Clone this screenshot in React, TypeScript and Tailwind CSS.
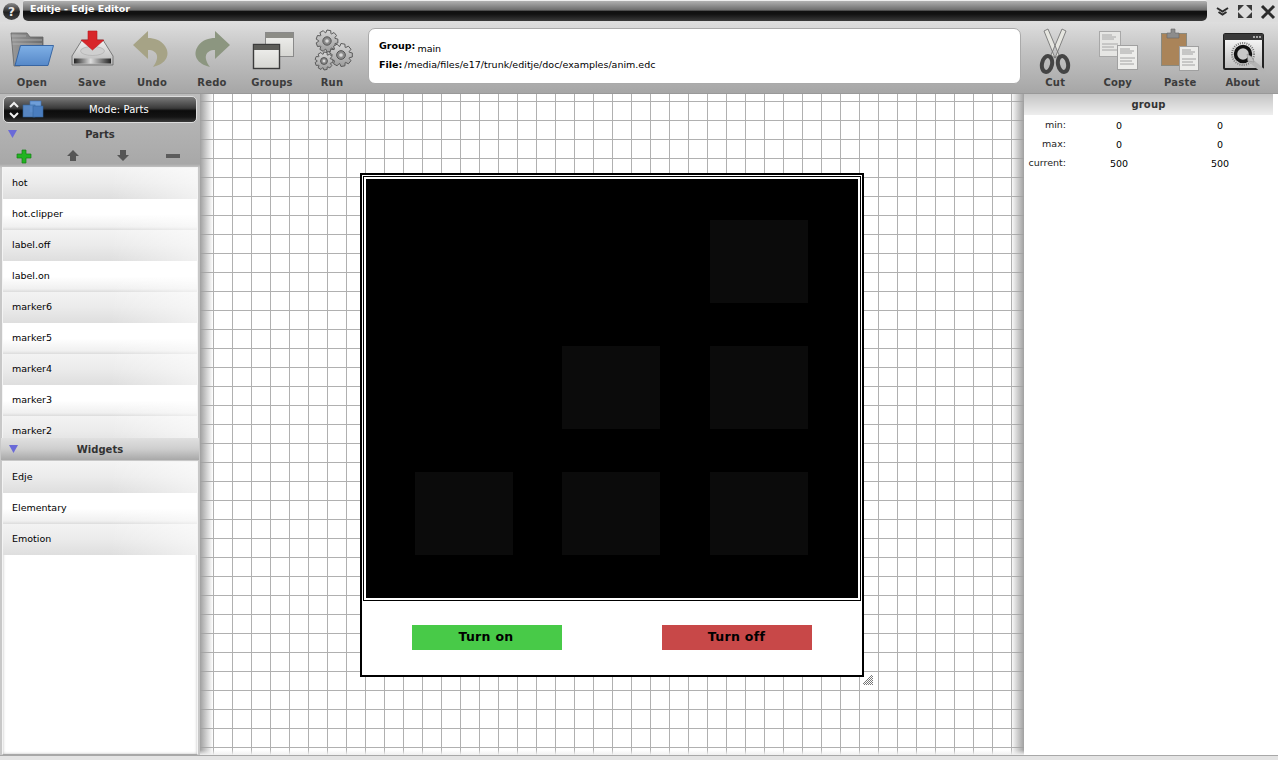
import type { ReactNode } from "react";

const parts = ["hot", "hot.clipper", "label.off", "label.on", "marker6", "marker5", "marker4", "marker3", "marker2"];
const widgets = ["Edje", "Elementary", "Emotion"];

// toothed outline for the Run icon
function gearPath(cx: number, cy: number, r: number, teeth: number) {
  const pts: string[] = [];
  const step = (Math.PI * 2) / teeth;
  for (let i = 0; i < teeth; i++) {
    const a = i * step;
    const offsets: [number, number][] = [
      [-0.32, r * 0.76],
      [-0.18, r],
      [0.18, r],
      [0.32, r * 0.76],
    ];
    for (const [o, rad] of offsets) {
      const t = a + o * step * 1.4;
      pts.push(`${(cx + Math.cos(t) * rad).toFixed(2)} ${(cy + Math.sin(t) * rad).toFixed(2)}`);
    }
  }
  return `M${pts.join("L")}Z`;
}

function Gear({ cx, cy, r }: { cx: number; cy: number; r: number }) {
  return (
    <g>
      <path d={gearPath(cx, cy, r, 9)} fill="url(#gearFill)" stroke="#5a5a5a" strokeWidth="1" />
      <circle cx={cx} cy={cy} r={r * 0.38} fill="#8a8a8a" stroke="#555" strokeWidth="1" />
      <circle cx={cx} cy={cy} r={r * 0.16} fill="#d8d8d8" />
    </g>
  );
}

function ToolButton({ label, width, children }: { label: string; width: string; children: ReactNode }) {
  return (
    <div className={`flex flex-col items-center shrink-0 ${width}`}>
      <div className="h-[48px] w-full">{children}</div>
      <span className="mt-[3px] text-[10px] leading-[12px] font-bold tracking-[0.2px] text-[#3c3c3c]">{label}</span>
    </div>
  );
}

function ListRow({ text, index }: { text: string; index: number }) {
  return (
    <div
      className={`h-[31px] shrink-0 flex items-center pl-[9px] text-[9.5px] text-black ${
        index % 2 === 0
          ? "bg-[linear-gradient(to_right,transparent_55%,rgba(255,255,255,0.55)),linear-gradient(#f3f3f3,#ececec_45%,#dedede)]"
          : "bg-[linear-gradient(to_right,transparent_55%,rgba(255,255,255,0.5)),linear-gradient(#ffffff,#ffffff_50%,#f0f0f0_90%,#dcdcdc)]"
      }`}
    >
      {text}
    </div>
  );
}

function SectionHeader({ title, className }: { title: string; className: string }) {
  return (
    <div className={`relative flex items-center justify-center shrink-0 ${className}`}>
      <svg className="absolute left-[8px] top-1/2 -translate-y-1/2" width="9" height="8" viewBox="0 0 9 8">
        <path d="M0 0H9L4.5 8Z" fill="#6a6ad8" />
      </svg>
      <span className="text-[10px] font-bold tracking-[0px] text-[#333]">{title}</span>
    </div>
  );
}

export default function App() {
  return (
    <div className="h-[760px] w-[1278px] overflow-hidden flex flex-col bg-[#d8d8d8] font-['DejaVu_Sans',sans-serif]">
      {/* title bar */}
      <div className="h-[22px] shrink-0 flex bg-[#dcdcdc]">
        <div className="w-[23px] shrink-0 flex items-center justify-center">
          <div className="w-[17px] h-[17px] mt-[1px] rounded-full bg-[linear-gradient(#8a8a8a,#222_55%,#444)] flex items-center justify-center text-[12px] leading-none font-bold text-[#e8e8e8]">
            ?
          </div>
        </div>
        <div className="w-[1184px] h-[21px] rounded-b-[5px] rounded-t-[2px] border-t border-[#eee] bg-[linear-gradient(#b0b0b0,#6e6e6e_45%,#111_52%,#111_65%,#3a3a3a)] pl-[7px] flex items-start">
          <span className="text-[9.5px] leading-[15px] font-bold text-white">Editje - Edje Editor</span>
        </div>
        <div className="flex-1">
          <svg width="71" height="22" viewBox="1207 0 71 22">
            <path d="M1217 8L1222.5 11.5L1228 8M1218.5 12L1222.5 14.5L1226.5 12" fill="none" stroke="#2c2c2c" strokeWidth="2" />
            <path d="M1238 5H1244L1238 11ZM1252 5H1246L1252 11ZM1238 18H1244L1238 12ZM1252 18H1246L1252 12Z" fill="#3a3a3a" />
            <path d="M1262 6L1274 18M1274 6L1262 18" stroke="#2c2c2c" strokeWidth="3" />
          </svg>
        </div>
      </div>

      {/* toolbar */}
      <div className="h-[72px] shrink-0 flex pl-[2px] pt-[4px] border-b border-[#999] bg-[linear-gradient(#dedede,#c4c4c4_40%,#a6a6a6)]">
        <ToolButton label="Open" width="w-[60px]">
          <svg width="60" height="48" viewBox="2 26 60 48">
            <defs>
              <linearGradient id="folderBlue" x1="0" y1="0" x2="0" y2="1">
                <stop offset="0" stopColor="#7fb0e6" />
                <stop offset="1" stopColor="#5688c8" />
              </linearGradient>
              <linearGradient id="folderBack" x1="0" y1="0" x2="1" y2="0">
                <stop offset="0" stopColor="#9a9a9a" />
                <stop offset="1" stopColor="#6c6c6c" />
              </linearGradient>
              <linearGradient id="gearFill" x1="0" y1="0" x2="0" y2="1">
                <stop offset="0" stopColor="#d6d6d6" />
                <stop offset="1" stopColor="#9c9c9c" />
              </linearGradient>
            </defs>
            <path d="M11 33H27L30 37H43V46L20 66H14Z" fill="url(#folderBack)" stroke="#666" strokeWidth="0.8" />
            <path d="M11.5 36H26M12 40H42M12.5 44H42" stroke="#b5b5b5" strokeWidth="0.8" />
            <path d="M20.5 45.5H53.5L48 65.5H15Z" fill="url(#folderBlue)" stroke="#2f5f9e" strokeWidth="0.9" />
          </svg>
        </ToolButton>
        <ToolButton label="Save" width="w-[60px]">
          <svg width="60" height="48" viewBox="62 26 60 48">
            <defs>
              <linearGradient id="diskTop" x1="0" y1="0" x2="0" y2="1">
                <stop offset="0" stopColor="#f0f0f0" />
                <stop offset="1" stopColor="#b4b4b4" />
              </linearGradient>
              <linearGradient id="diskStrip" x1="0" y1="0" x2="1" y2="0">
                <stop offset="0" stopColor="#222" />
                <stop offset="0.45" stopColor="#ddd" />
                <stop offset="1" stopColor="#222" />
              </linearGradient>
            </defs>
            <path d="M82 40H103L113 56V65H72V56Z" fill="url(#diskTop)" stroke="#666" strokeWidth="0.8" />
            <ellipse cx="92.5" cy="51" rx="12" ry="4.5" fill="#cfcfcf" stroke="#aaa" strokeWidth="0.6" />
            <rect x="74" y="58.5" width="37" height="5" fill="url(#diskStrip)" />
            <path d="M88 31H97V40H104L92.5 50L81 40H88Z" fill="#d8262a" stroke="#b81a1e" strokeWidth="0.6" />
          </svg>
        </ToolButton>
        <ToolButton label="Undo" width="w-[60px]">
          <svg width="60" height="48" viewBox="122 26 60 48">
            <path d="M148 31L133 45L148 59V50C158 50 160 58 153 67C166 64 171 55 165 46C161 40 154 38 148 38Z" fill="#a6a386" />
          </svg>
        </ToolButton>
        <ToolButton label="Redo" width="w-[60px]">
          <svg width="60" height="48" viewBox="182 26 60 48">
            <path d="M215 31L230 45L215 59V50C205 50 203 58 210 67C197 64 192 55 198 46C202 40 209 38 215 38Z" fill="#8c9680" />
          </svg>
        </ToolButton>
        <ToolButton label="Groups" width="w-[60px]">
          <svg width="60" height="48" viewBox="242 26 60 48">
            <defs>
              <linearGradient id="paneBody" x1="0" y1="0" x2="0" y2="1">
                <stop offset="0" stopColor="#f2f2f0" />
                <stop offset="1" stopColor="#d6d6d2" />
              </linearGradient>
            </defs>
            <rect x="265.5" y="32.5" width="28" height="24" fill="url(#paneBody)" stroke="#8a8a8a" />
            <rect x="266" y="33" width="27" height="5" fill="#8c8c86" />
            <rect x="253.5" y="44.5" width="26" height="24" fill="url(#paneBody)" stroke="#3c3c3c" strokeWidth="1.4" />
            <rect x="254" y="45" width="25" height="5" fill="#5c5c58" />
          </svg>
        </ToolButton>
        <ToolButton label="Run" width="w-[60px]">
          <svg width="60" height="48" viewBox="302 26 60 48">
            <Gear cx={327} cy={41} r={11} />
            <Gear cx={341} cy={55} r={11.5} />
            <Gear cx={324} cy={61} r={9} />
          </svg>
        </ToolButton>

        <div className="w-[653px] h-[56px] ml-[6px] mt-[2px] shrink-0 rounded-[7px] bg-white border border-[#aaa] pl-[10px] pt-[10px] text-[9.5px] text-black">
          <div className="flex items-end h-[14px] gap-[2px]">
            <span className="font-bold">Group:</span>
            <span className="translate-y-[3px]">main</span>
          </div>
          <div className="flex items-center h-[14px] mt-[5px] gap-[2px]">
            <span className="font-bold">File:</span>
            <span>/media/files/e17/trunk/editje/doc/examples/anim.edc</span>
          </div>
        </div>

        <div className="ml-[3px] flex">
          <ToolButton label="Cut" width="w-[62.5px]">
            <svg width="62" height="48" viewBox="1024 26 62 48">
              <path d="M1044 31L1048 29L1059 55L1055 58Z M1066 31L1062 29L1051 55L1055 58Z" fill="#e6e6e0" stroke="#777" strokeWidth="0.9" />
              <ellipse cx="1047" cy="64" rx="5" ry="8" transform="rotate(12 1047 64)" fill="none" stroke="#444" strokeWidth="4" />
              <ellipse cx="1063" cy="64" rx="5" ry="8" transform="rotate(-12 1063 64)" fill="none" stroke="#444" strokeWidth="4" />
            </svg>
          </ToolButton>
          <ToolButton label="Copy" width="w-[62.5px]">
            <svg width="62" height="48" viewBox="1087 26 62 48">
              <rect x="1099.5" y="31.5" width="21" height="25" fill="#e6e6e4" stroke="#a8a8a8" />
              <path d="M1102 35H1112M1102 37H1116M1102 39H1114M1102 44H1118M1102 47H1114M1102 50H1117" stroke="#a0a0a0" strokeWidth="0.9" />
              <rect x="1117.5" y="45.5" width="20" height="24" fill="#ededeb" stroke="#a0a0a0" />
              <path d="M1120 49H1130M1120 51H1134M1120 53H1132M1120 58H1135M1120 61H1132M1120 64H1134" stroke="#9a9a9a" strokeWidth="0.9" />
            </svg>
          </ToolButton>
          <ToolButton label="Paste" width="w-[62.5px]">
            <svg width="62" height="48" viewBox="1149 26 62 48">
              <rect x="1161.5" y="33.5" width="25" height="32" fill="#aa8459" stroke="#8a8a80" />
              <path d="M1171 29H1175V33H1179V38H1167V33H1171Z" fill="#8c8c8c" stroke="#666" strokeWidth="0.6" />
              <rect x="1179.5" y="46.5" width="19" height="24" fill="#ececea" stroke="#a0a0a0" />
              <path d="M1182 50H1191M1182 52H1195M1182 54H1193M1182 59H1196M1182 62H1193M1182 65H1195" stroke="#9a9a9a" strokeWidth="0.9" />
            </svg>
          </ToolButton>
          <ToolButton label="About" width="w-[62.5px]">
            <svg width="62" height="48" viewBox="1212 26 62 48">
              <defs>
                <linearGradient id="aboutBody" x1="0" y1="0" x2="0" y2="1">
                  <stop offset="0" stopColor="#ffffff" />
                  <stop offset="1" stopColor="#bdbdbd" />
                </linearGradient>
              </defs>
              <rect x="1224" y="34" width="39" height="35" rx="1.5" fill="url(#aboutBody)" stroke="#222" strokeWidth="2" />
              <rect x="1224" y="34" width="39" height="6" fill="#3a3a3a" />
              <circle cx="1254" cy="37" r="0.9" fill="#ddd" />
              <circle cx="1257" cy="37" r="0.9" fill="#ddd" />
              <circle cx="1260" cy="37" r="0.9" fill="#ddd" />
              <circle cx="1243" cy="54" r="11" fill="none" stroke="#777" strokeWidth="2" strokeDasharray="1 1.2" />
              <circle cx="1243" cy="54" r="7.5" fill="#c8c8c8" stroke="#111" strokeWidth="3.5" />
              <path d="M1250 60L1263 71" stroke="#b4b4b4" strokeWidth="4.5" strokeLinecap="round" />
              <path d="M1247 54L1248 61L1254 62L1252 57Z" fill="#c0c0c0" stroke="#888" strokeWidth="0.5" />
            </svg>
          </ToolButton>
        </div>
      </div>

      {/* main area */}
      <div className="flex-1 min-h-0 flex">
        {/* left panel */}
        <div className="w-[200px] shrink-0 flex flex-col bg-[#b4b4b4] bg-[linear-gradient(#bcbcbc,#a8a8a8_70px,#c8c8c8_74px)]">
          <div className="h-[30px] shrink-0 pt-[2px] px-[3px]">
            <div className="relative h-[27px] rounded-[5px] border border-[#ddd] bg-[linear-gradient(#7a7a7a,#3a3a3a_45%,#0c0c0c_55%,#141414_80%,#3a3a3a)] flex items-center justify-center">
              <svg className="absolute left-[4px] top-[3px]" width="38" height="20" viewBox="0 0 38 20">
                <path d="M2 7L6 3L10 7M2 13L6 17L10 13" fill="none" stroke="#f0f0f0" strokeWidth="2" />
                <rect x="22" y="1" width="11" height="11" fill="#6f9ed8" stroke="#3f70b4" strokeWidth="0.6" />
                <rect x="15" y="5" width="12" height="12" fill="#5b8cca" stroke="#34669f" strokeWidth="0.6" opacity="0.95" />
                <rect x="25" y="6" width="10" height="11" fill="#4a7dbe" stroke="#34669f" strokeWidth="0.6" />
              </svg>
              <span className="ml-[38px] text-[10px] tracking-[0.1px] text-white">Mode: Parts</span>
            </div>
          </div>
          <SectionHeader title="Parts" className="h-[20px]" />
          <div className="h-[23px] shrink-0 flex items-center">
            <svg width="200" height="23" viewBox="0 144 200 23">
              <path d="M22 150H26V154H31V158H26V163H22V158H17V154H22Z" fill="#22b422" stroke="#158015" strokeWidth="0.7" />
              <path d="M73 150L79 156H76V161H70V156H67Z" fill="#555" />
              <path d="M123 161L117 155H120V150H126V155H129Z" fill="#555" />
              <rect x="166" y="154" width="14" height="4" fill="#5c5c5c" />
            </svg>
          </div>
          <div className="h-[271px] shrink-0 mx-[2px] border-t border-x border-[#f4f4f4] flex flex-col overflow-hidden bg-white">
            {parts.map((p, i) => (
              <ListRow key={p} text={p} index={i} />
            ))}
          </div>
          <SectionHeader
            title="Widgets"
            className="h-[22px] mx-[1px] bg-[linear-gradient(#e0e0e0,#cecece_50%,#a8a8a8)]"
          />
          <div className="flex-1 min-h-0 mx-[2px] mt-[1px] border border-[#f4f4f4] border-b-[#a8a8a8] flex flex-col bg-white shadow-[inset_0_0_3px_#bbb]">
            {widgets.map((w, i) => (
              <ListRow key={w} text={w} index={i} />
            ))}
          </div>
        </div>

        {/* canvas */}
        <div className="relative flex-1 min-w-0 pl-[160px] pt-[79px] bg-white bg-[linear-gradient(#b0b0b0_1px,transparent_1px),linear-gradient(90deg,#b0b0b0_1px,transparent_1px)] bg-size-[19px_19px] bg-position-[13px_7px]">
          <div className="absolute left-0 top-0 bottom-0 w-[13px] bg-[linear-gradient(to_right,#a0a0a0,rgba(255,255,255,0))]" />
          <div className="absolute right-0 top-0 bottom-0 w-[13px] bg-[linear-gradient(to_left,#a0a0a0,rgba(255,255,255,0))]" />
          <div className="absolute left-0 right-0 bottom-0 h-[5px] bg-[linear-gradient(to_top,#f0f0f0,rgba(255,255,255,0))]" />

          <div className="relative w-[504px] h-[504px] border-2 border-black bg-white p-px flex flex-col">
            <div className="h-[425px] shrink-0 border border-black p-[2px]">
              <div className="h-[419px] bg-black pl-[49px] pt-[41px] grid grid-cols-[98px_99px_98px] grid-rows-[83px_83px_83px] gap-x-[49px] gap-y-[43px]">
                <div className="col-start-3 row-start-1 bg-[#0b0b0b]" />
                <div className="col-start-2 row-start-2 w-[98px] bg-[#0b0b0b]" />
                <div className="col-start-3 row-start-2 bg-[#0b0b0b]" />
                <div className="col-start-1 row-start-3 bg-[#0b0b0b]" />
                <div className="col-start-2 row-start-3 w-[98px] bg-[#0b0b0b]" />
                <div className="col-start-3 row-start-3 bg-[#0b0b0b]" />
              </div>
            </div>
            <div className="flex pl-[49px] pt-[24px] gap-[100px]">
              <div className="w-[150px] h-[25px] pr-[2px] bg-[#48ca48] flex items-center justify-center text-[12.5px] font-bold tracking-[0.3px] text-black">
                Turn on
              </div>
              <div className="w-[150px] h-[25px] pr-[1px] bg-[#c84848] flex items-center justify-center text-[12.5px] font-bold tracking-[0.3px] text-black">
                Turn off
              </div>
            </div>
            <svg className="absolute left-[500px] top-[499px]" width="12" height="12" viewBox="0 0 12 12">
              <path d="M1 10L10 1M2 11L11 2M4 11L11 4M6 11L11 6M8 11L11 8M10 11L11 10" stroke="#777" strokeWidth="1" />
            </svg>
          </div>
        </div>

        {/* right panel */}
        <div className="w-[254px] shrink-0 bg-white">
          <div className="w-[249px] h-[21px] flex items-center justify-center bg-[linear-gradient(#c4c4c4,#eeeeee)] text-[10px] font-bold tracking-[0.2px] text-[#333]">
            group
          </div>
          <div className="mt-[1px] grid grid-cols-[42px_106px_96px] auto-rows-[19px] items-center text-[9.5px] text-black">
            <span className="text-right text-[#222]">min:</span>
            <span className="pt-px text-center">0</span>
            <span className="pt-px text-center">0</span>
            <span className="text-right text-[#222]">max:</span>
            <span className="pt-px text-center">0</span>
            <span className="pt-px text-center">0</span>
            <span className="text-right text-[#222]">current:</span>
            <span className="pt-px text-center">500</span>
            <span className="pt-px text-center">500</span>
          </div>
        </div>
      </div>

      {/* status strip */}
      <div className="h-[5px] shrink-0 border-t border-[#a8a8a8] bg-[#e4e4e4]" />
    </div>
  );
}
